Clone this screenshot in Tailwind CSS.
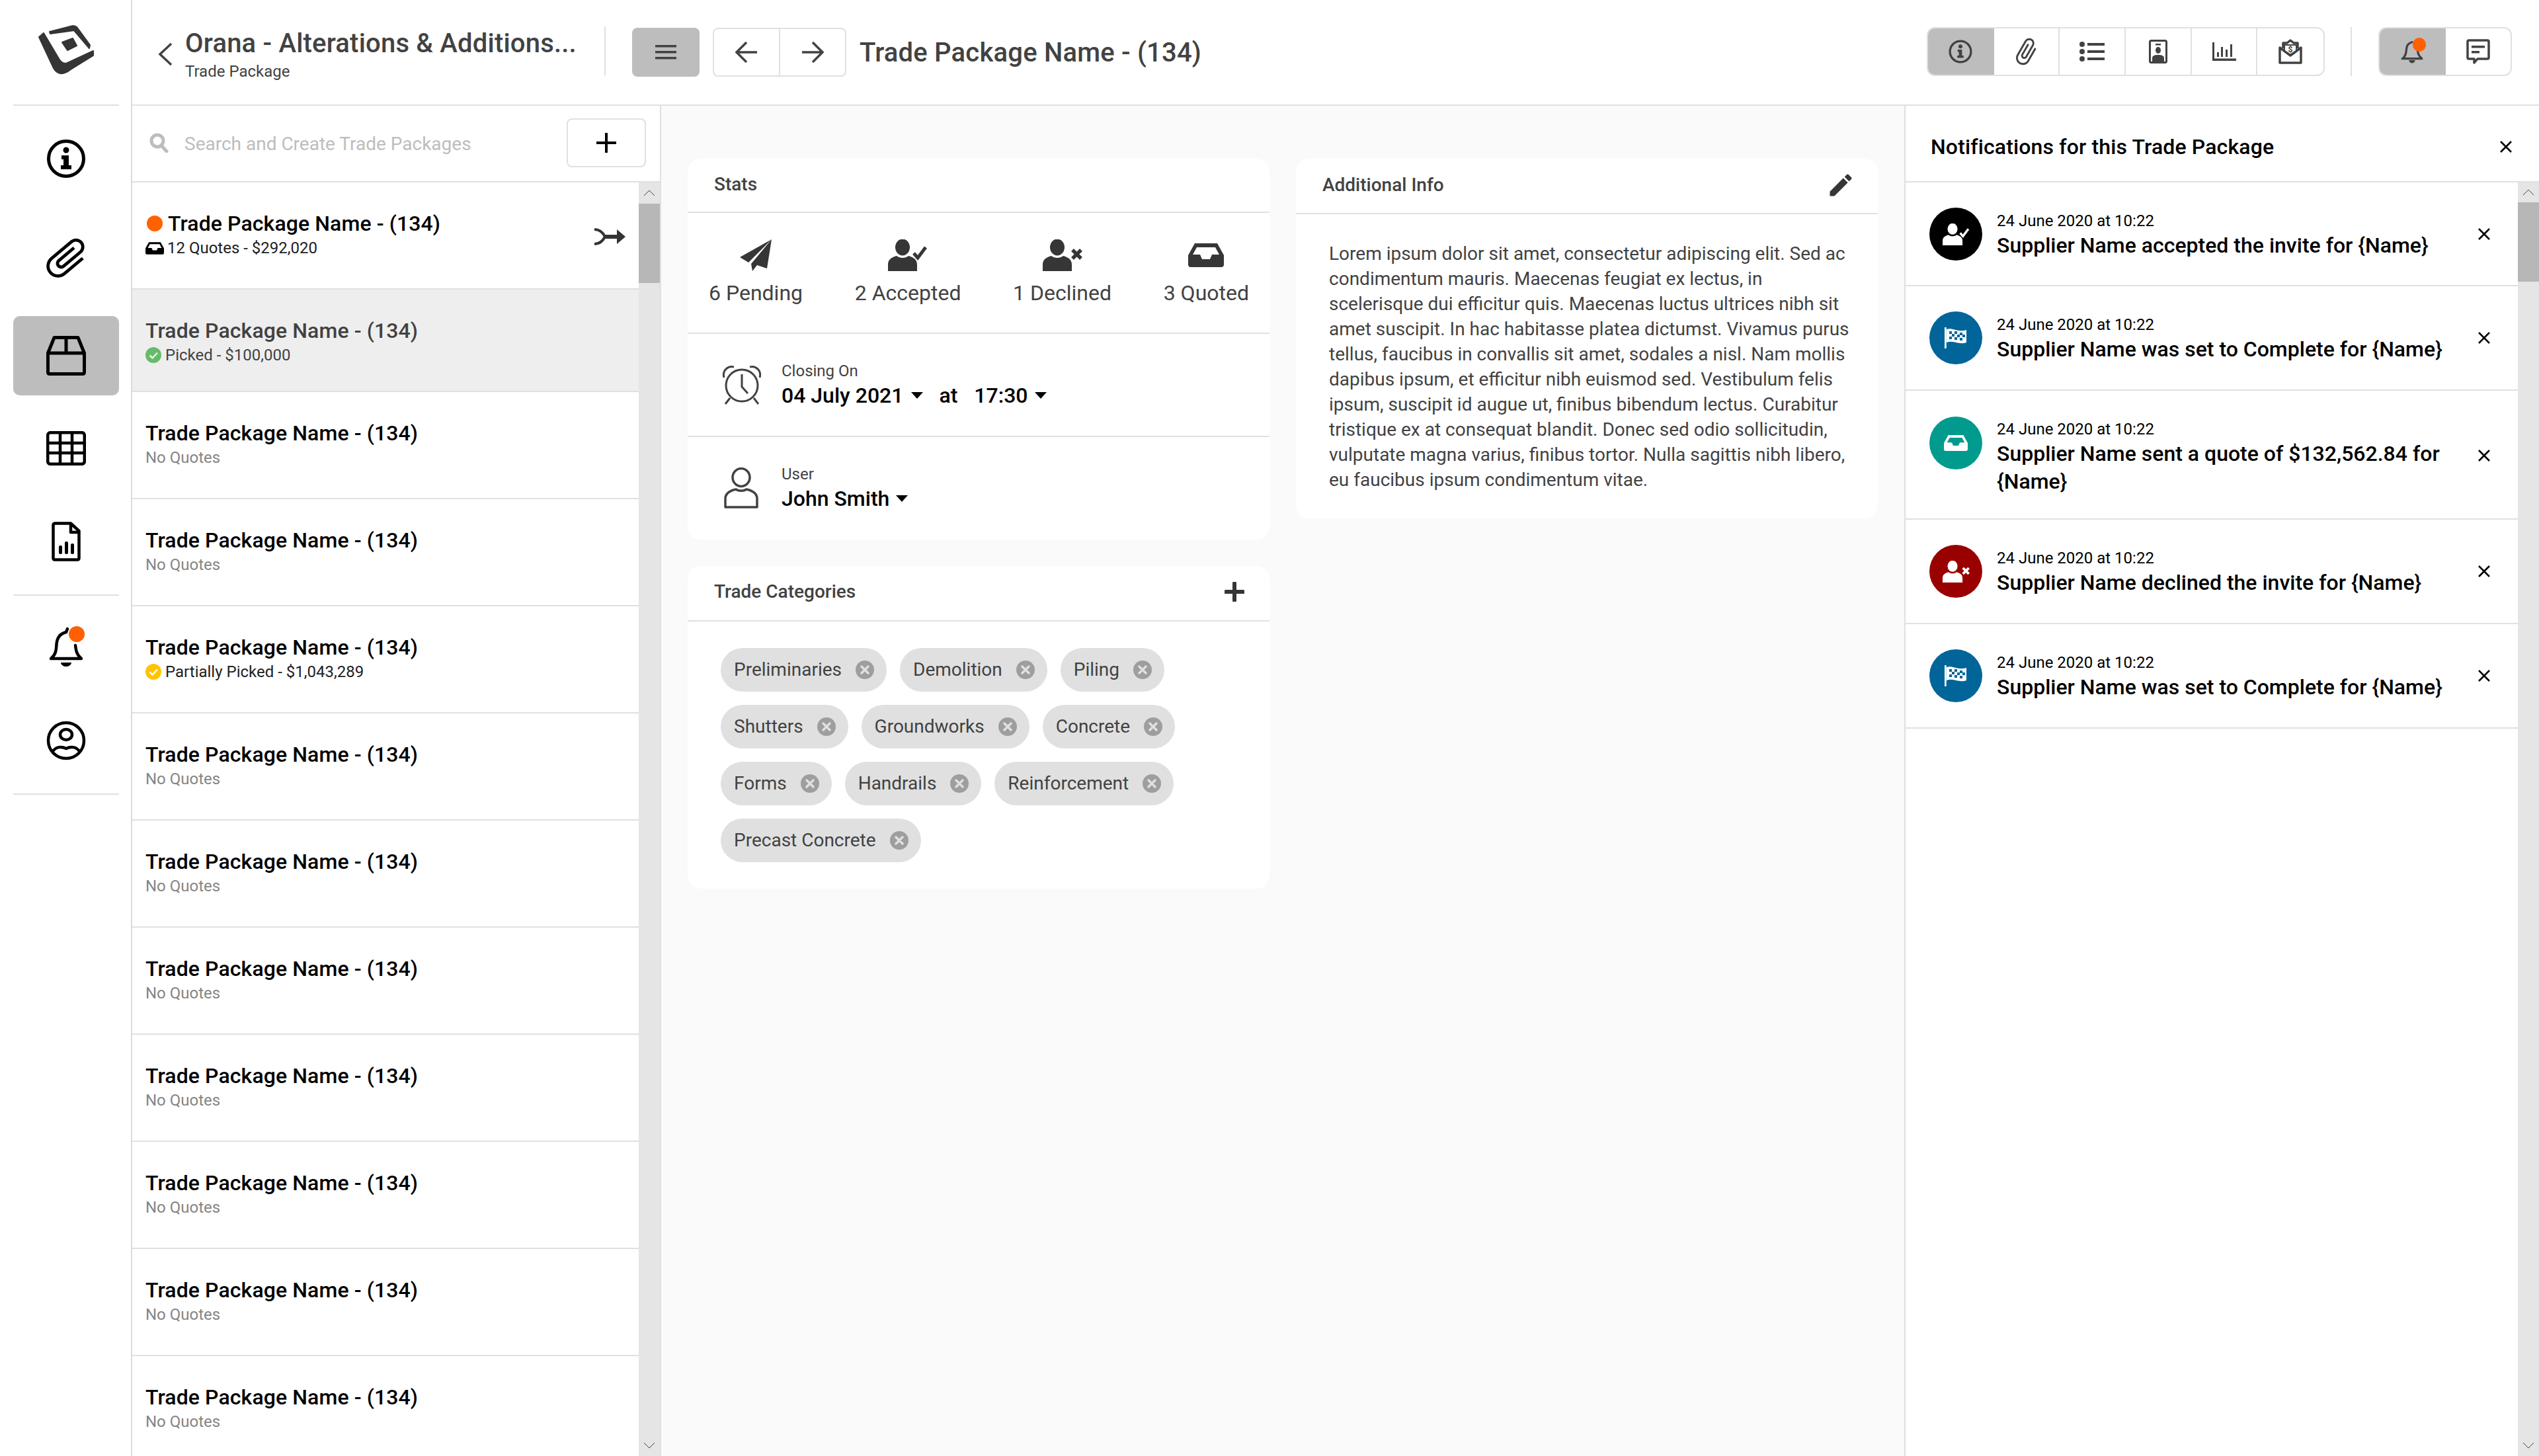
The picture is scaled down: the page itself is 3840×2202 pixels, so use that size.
<!DOCTYPE html>
<html><head><meta charset="utf-8"><script src="https://cdn.jsdelivr.net/npm/@tailwindcss/browser@4"></script><title>Trade Package</title></head>
<body class="m-0 bg-white">
<svg width="0" height="0" class="absolute">
<defs>
<g id="inbox"><path fill-rule="evenodd" d="M10 0H44L54 18V32a4 4 0 0 1-4 4H4a4 4 0 0 1-4-4V18ZM13 6 7 17H18L21 24H33L36 17H47L41 6Z"/></g>
<g id="pcheck"><ellipse cx="22" cy="12" rx="11" ry="12.5"/><path d="M0 48V38C0 30 6 27 13 25C18 29 26 29 31 25C38 27 44 30 44 38V48Z"/><path d="M39 21 45 28 57 12" fill="none" stroke="currentColor" stroke-width="5"/></g>
<g id="pcross"><ellipse cx="22" cy="12" rx="11" ry="12.5"/><path d="M0 48V38C0 30 6 27 13 25C18 29 26 29 31 25C38 27 44 30 44 38V48Z"/><path d="M45 16 58 29M58 16 45 29" fill="none" stroke="currentColor" stroke-width="5.5"/></g>
<g id="chipx"><circle cx="14" cy="14" r="14" fill="#9e9e9e"/><path d="M9 9 19 19M19 9 9 19" stroke="#e0e0e0" stroke-width="3.5" stroke-linecap="round"/></g>
<g id="cross"><path d="M2 2 18 18M18 2 2 18" stroke="#000" stroke-width="2.6" fill="none"/></g>
<g id="flag"><path d="M1 1V31" stroke="#fff" stroke-width="3.5" stroke-linecap="round"/><path d="M3 3C12 0 20 8 33 4V23C22 27 12 19 3 23Z" fill="#fff"/><path d="M7 6h4v4H7ZM15 6h4v4h-4ZM23 8h4v4h-4ZM11 10h4v4h-4ZM19 11h4v4h-4ZM27 11h4v4h-4ZM7 14h4v4H7ZM15 15h4v4h-4ZM23 16h4v4h-4Z" fill="#01659a"/></g>
</defs>
</svg>
<div class="w-[3840px] h-[2202px] overflow-hidden flex bg-white font-[Roboto,sans-serif] text-[#424242]">

<!-- rail -->
<aside class="w-[200px] shrink-0 border-r-2 border-[#dcdcdc] pl-[2px] flex flex-col items-center">
  <div class="w-[160px] h-[160px] shrink-0 border-b-2 border-[#e0e0e0] flex items-center justify-center pb-[10px]">
    <svg width="100" height="90" viewBox="50 30 100 90" fill="#353535" stroke="#353535" stroke-width="2" stroke-linejoin="round"><path d="M59 57 66 51 88 88Q92 97 100 97L141 78V85L107 106Q98 113 91 112 85 111 81 104Z"/><path d="M75 49 110 40Q114 40 117 43L136 69 135 74 112 47 76 52Z"/><path d="M94 65 110 59 116 70 102 77Z"/></svg>
  </div>
  <div class="w-[160px] h-[120px] mt-[20px] flex items-center justify-center">
    <svg width="60" height="60" viewBox="0 0 60 60"><circle cx="30" cy="30" r="26.5" fill="none" stroke="#000" stroke-width="5"/><circle cx="30" cy="17" r="4.5"/><path d="M23 25H34V40H38V46H22V40H26V31H23Z"/></svg>
  </div>
  <div class="w-[160px] h-[120px] mt-[30px] flex items-center justify-center">
    <svg width="76" height="76" viewBox="0 0 24 24"><path transform="rotate(50 12 12)" d="M16.5 6v11.5c0 2.21-1.79 4-4 4s-4-1.79-4-4V5c0-1.38 1.12-2.5 2.5-2.5s2.5 1.12 2.5 2.5v10.5c0 .55-.45 1-1 1s-1-.45-1-1V6H10v9.5c0 1.38 1.12 2.5 2.5 2.5s2.5-1.12 2.5-2.5V5c0-2.21-1.79-4-4-4S7 2.79 7 5v12.5c0 3.04 2.46 5.5 5.5 5.5s5.5-2.46 5.5-5.5V6h-1.5z"/></svg>
  </div>
  <div class="w-[160px] h-[120px] mt-[28px] rounded-[10px] bg-[#bdbdbd] flex items-center justify-center">
    <svg width="60" height="60" viewBox="0 0 60 60" fill="none" stroke="#000" stroke-width="5" stroke-linejoin="round"><path d="M12 2.500H48L57.500 26V55Q57.500 57.500 55 57.500H5Q2.500 57.500 2.500 55V26ZM2.500 26H57.500M30 3V26"/></svg>
  </div>
  <div class="w-[160px] h-[120px] mt-[20px] flex items-center justify-center">
    <svg width="60" height="52" viewBox="0 0 60 52" fill="none" stroke="#000" stroke-width="4.500"><rect x="2.200" y="2.200" width="55.600" height="47.600" rx="4"/><path d="M21 2V50M39 2V50M2 18H58M2 33H58"/></svg>
  </div>
  <div class="w-[160px] h-[120px] mt-[21px] flex items-center justify-center">
    <svg width="44" height="60" viewBox="0 0 44 60"><path d="M6 2.500H29L41.500 14V55Q41.500 57.500 39 57.500H5Q2.500 57.500 2.500 55V5Q2.500 2.500 6 2.500ZM29 3V16H41" fill="none" stroke="#000" stroke-width="4.500" stroke-linejoin="round"/><rect x="11" y="36" width="5" height="13" rx="2"/><rect x="20" y="30" width="5" height="19" rx="2"/><rect x="29" y="33" width="5" height="16" rx="2"/></svg>
  </div>
  <div class="w-[160px] h-[2px] mt-[20px] bg-[#e0e0e0] shrink-0"></div>
  <div class="w-[160px] h-[120px] mt-[19px] flex items-center justify-center relative">
    <svg width="60" height="64" viewBox="0 0 60 64" fill="none" stroke="#000" stroke-width="4.500" stroke-linecap="round"><path d="M7 48H53M8 47C15 41 15 34 15.500 27C16 16 22 10 30 8L32 3M44 28C45 36 46 42 52 47"/><path d="M22 54H38C37 62 23 62 22 54Z" fill="#000" stroke="none"/></svg>
    <div class="absolute left-[84px] top-[27px] w-[24px] h-[24px] rounded-full bg-[#ff6100]"></div>
  </div>
  <div class="w-[160px] h-[120px] mt-[20px] flex items-center justify-center">
    <svg width="60" height="60" viewBox="0 0 60 60" fill="none" stroke="#000" stroke-width="4.500"><circle cx="30" cy="30" r="27"/><ellipse cx="30" cy="21" rx="9" ry="8"/><path d="M9 48C14 38 24 39 30 42C36 39 46 38 51 48"/></svg>
  </div>
  <div class="w-[160px] h-[2px] mt-[20px] bg-[#e0e0e0] shrink-0"></div>
</aside>

<div class="flex-1 flex flex-col min-w-0">
<!-- header -->
<header class="h-[160px] shrink-0 border-b-2 border-[#e0e0e0] flex items-start">
  <div class="w-[798px] flex items-start h-full relative">
    <svg class="ml-[38px] mt-[64px]" width="24" height="36" viewBox="0 0 24 36" fill="none" stroke="#424242" stroke-width="3.500"><path d="M21 2 4 18 21 34"/></svg>
    <div class="ml-[18px] mt-[42px]">
      <div class="text-[40px] leading-[48px] font-medium tracking-[0.2px] whitespace-nowrap">Orana - Alterations &amp; Additions...</div>
      <div class="text-[24px] leading-[28px] mt-[4px]">Trade Package</div>
    </div>
    <div class="absolute left-[714px] top-[40px] w-[2px] h-[74px] bg-[#e0e0e0]"></div>
    <div class="absolute left-[756px] top-[42px] w-[102px] h-[74px] rounded-[8px] bg-[#bdbdbd] flex items-center justify-center">
      <svg width="32" height="24" viewBox="0 0 32 24" fill="#424242"><rect y="1" width="32" height="3.500"/><rect y="10" width="32" height="3.500"/><rect y="19" width="32" height="3.500"/></svg>
    </div>
    <div class="absolute left-[878px] top-[42px] w-[202px] h-[74px] rounded-[8px] border-2 border-[#e0e0e0] flex divide-x-2 divide-[#e0e0e0]">
      <div class="flex-1 flex items-center justify-center"><svg width="36" height="34" viewBox="0 0 36 34" fill="none" stroke="#424242" stroke-width="3.500"><path d="M34 17H3M18 2 3 17 18 32"/></svg></div>
      <div class="flex-1 flex items-center justify-center"><svg width="36" height="34" viewBox="0 0 36 34" fill="none" stroke="#424242" stroke-width="3.500"><path d="M2 17H33M18 2 33 17 18 32"/></svg></div>
    </div>
    <div class="absolute left-[1100px] top-[56px] text-[40px] leading-[48px] font-medium tracking-[0.2px] whitespace-nowrap">Trade Package Name - (134)</div>
  </div>
  <div class="ml-auto flex items-center h-[74px] mt-[41px] pr-[41px]">
    <div class="w-[602px] h-[74px] rounded-[12px] border-2 border-[#e0e0e0] flex overflow-hidden">
      <div class="w-[102px] -ml-[2px] bg-[#bdbdbd] flex items-center justify-center"><svg width="36" height="36" viewBox="0 0 60 60"><circle cx="30" cy="30" r="26.500" fill="none" stroke="#424242" stroke-width="5.500"/><circle cx="30" cy="17" r="5" fill="#424242"/><path d="M23 25H34V40H38V46H22V40H26V31H23Z" fill="#424242"/></svg></div>
      <div class="w-[100px] border-r-2 border-[#e0e0e0] flex items-center justify-center"><svg width="46" height="46" viewBox="0 0 24 24" fill="#424242"><path transform="rotate(30 12 12)" d="M16.5 6v11.5c0 2.21-1.79 4-4 4s-4-1.790-4-4V5c0-1.380 1.120-2.500 2.500-2.500s2.500 1.120 2.500 2.500v10.500c0 .55-.45 1-1 1s-1-.45-1-1V6H10v9.500c0 1.380 1.120 2.500 2.500 2.500s2.500-1.120 2.500-2.500V5c0-2.210-1.790-4-4-4S7 2.790 7 5v12.500c0 3.040 2.460 5.500 5.500 5.500s5.500-2.460 5.500-5.500V6h-1.500z"/></svg></div>
      <div class="w-[100px] border-r-2 border-[#e0e0e0] flex items-center justify-center"><svg width="38" height="30" viewBox="0 0 38 30" fill="#424242"><circle cx="4" cy="4" r="4"/><circle cx="4" cy="15" r="4"/><circle cx="4" cy="26" r="4"/><rect x="12" y="2" width="26" height="4"/><rect x="12" y="13" width="26" height="4"/><rect x="12" y="24" width="26" height="4"/></svg></div>
      <div class="w-[100px] border-r-2 border-[#e0e0e0] flex items-center justify-center"><svg width="28" height="36" viewBox="0 0 28 36"><rect x="1.500" y="1.500" width="25" height="33" rx="2" fill="none" stroke="#424242" stroke-width="3"/><rect x="10" y="6" width="8" height="2.500" fill="#424242"/><ellipse cx="14" cy="16" rx="4" ry="5" fill="#424242"/><path d="M5 33V28C5 24 9 23 14 23S23 24 23 28V33Z" fill="#424242"/></svg></div>
      <div class="w-[100px] border-r-2 border-[#e0e0e0] flex items-center justify-center"><svg width="36" height="28" viewBox="0 0 36 28" fill="#424242"><path d="M0 0H3V24.500H36V28H0Z"/><rect x="7" y="15" width="3" height="7"/><rect x="13" y="7" width="3" height="15"/><rect x="20" y="11" width="3" height="11"/><rect x="27" y="3" width="3" height="19"/></svg></div>
      <div class="w-[100px] flex items-center justify-center"><svg width="36" height="38" viewBox="0 0 36 38" fill="none" stroke="#424242" stroke-width="3.500"><path d="M7 14V6H13L18 2 23 6H29V14M2 13V36H34V13L18 25Z" stroke-linejoin="round"/><path d="M8 8H28V18L18 25 8 18Z" fill="#424242" stroke="none"/><path d="M10 10H26V17L18 22.500 10 17Z" fill="#fff" stroke="none"/><text x="18" y="19.500" text-anchor="middle" font-size="12" font-weight="700" fill="#424242" stroke="none" font-family="Roboto">$</text></svg></div>
    </div>
    <div class="w-[2px] h-[74px] bg-[#e0e0e0] ml-[39px]"></div>
    <div class="w-[202px] h-[74px] ml-[40px] rounded-[12px] border-2 border-[#e0e0e0] flex overflow-hidden">
      <div class="w-[102px] -ml-[2px] bg-[#bdbdbd] flex items-center justify-center relative"><svg width="36" height="38" viewBox="0 0 60 64" fill="none" stroke="#424242" stroke-width="5.500" stroke-linecap="round"><path d="M5 50H55M7 49C15 41 15 34 15.500 27C16 16 22 10 30 8M44 28C45 36 46 42 54 49"/><path d="M22 54H38C37 64 23 64 22 54Z" fill="#424242" stroke="none"/></svg><div class="absolute left-[52px] top-[14px] w-[20px] h-[21px] rounded-full bg-[#ff6100]"></div></div>
      <div class="flex-1 flex items-center justify-center"><svg width="36" height="38" viewBox="0 0 36 38"><path d="M4 2H32Q34 2 34 4V28Q34 30 32 30H17L12 36V30H4Q2 30 2 28V4Q2 2 4 2Z" fill="none" stroke="#424242" stroke-width="3.500" stroke-linejoin="round"/><rect x="8" y="10" width="20" height="3.500" fill="#424242"/><rect x="8" y="18" width="12" height="3.500" fill="#424242"/></svg></div>
    </div>
  </div>
</header>

<div class="flex-1 flex min-h-0">
<!-- trade package list -->
<section class="w-[800px] shrink-0 border-r-2 border-[#e0e0e0] flex flex-col min-h-0">
  <div class="h-[116px] shrink-0 border-b-2 border-[#e0e0e0] flex items-center pl-[26px]">
    <svg width="30" height="30" viewBox="0 0 30 30" fill="none" stroke="#bdbdbd" stroke-width="5" class="mt-[-2px]"><circle cx="12" cy="12" r="9"/><path d="M18 19 26 28" stroke-linecap="round"/></svg>
    <div class="ml-[23px] mt-[2px] text-[28px] text-[#bdbdbd] leading-[34px] whitespace-nowrap">Search and Create Trade Packages</div>
    <div class="ml-auto mr-[21px] mt-[-2px] w-[120px] h-[74px] rounded-[8px] border-2 border-[#e0e0e0] flex items-center justify-center"><svg width="30" height="30" viewBox="0 0 30 30"><path d="M15 0V30M0 15H30" stroke="#000" stroke-width="4"/></svg></div>
  </div>
  <div class="flex-1 flex min-h-0">
    <div class="flex-1 overflow-hidden flex flex-col">
      <div class="h-[162px] shrink-0 border-b-2 border-[#e0e0e0] pl-[20px] pt-[42px] relative">
        <div class="flex items-center text-[32px] leading-[40px] font-medium tracking-[0.1px] text-black whitespace-nowrap"><span class="w-[24px] h-[24px] ml-[2px] mr-[8px] rounded-full bg-[#ff6100]"></span>Trade Package Name - (134)</div>
        <div class="flex items-center text-[24px] leading-[28px] mt-[3px] text-[#212121]"><svg width="28" height="19" viewBox="0 0 54 36" class="mr-[5px]" fill="#000"><use href="#inbox"/></svg>12 Quotes - $292,020</div>
        <svg class="absolute left-[699px] top-[69px]" width="47" height="26" viewBox="0 0 47 26" fill="none" stroke="#333"><path d="M0 2C9 2 13 7 16 13C13 19 9 24 0 24" stroke-width="4"/><path d="M16 13H36" stroke-width="6"/><path d="M34 2 47 13 34 24Z" fill="#333" stroke="none"/></svg>
      </div>
      <div class="h-[155px] shrink-0 border-b-2 border-[#e0e0e0] bg-[#eeeeee] pl-[20px] pt-[42px]">
        <div class="text-[32px] leading-[40px] font-medium tracking-[0.1px] whitespace-nowrap">Trade Package Name - (134)</div>
        <div class="flex items-center text-[24px] leading-[28px] mt-[3px]"><svg width="24" height="24" viewBox="0 0 24 24" class="mr-[6px]"><circle cx="12" cy="12" r="12" fill="#66bb6a"/><path d="M6.500 12.500 10.500 16.500 18 8.500" fill="none" stroke="#e8f5e9" stroke-width="2.500"/></svg>Picked - $100,000</div>
      </div>
      <div class="h-[162px] shrink-0 border-b-2 border-[#e0e0e0] pl-[20px] pt-[42px]"><div class="text-[32px] leading-[40px] font-medium tracking-[0.1px] text-black whitespace-nowrap">Trade Package Name - (134)</div><div class="text-[24px] leading-[28px] mt-[3px] text-[#858585]">No Quotes</div></div>
      <div class="h-[162px] shrink-0 border-b-2 border-[#e0e0e0] pl-[20px] pt-[42px]"><div class="text-[32px] leading-[40px] font-medium tracking-[0.1px] text-black whitespace-nowrap">Trade Package Name - (134)</div><div class="text-[24px] leading-[28px] mt-[3px] text-[#858585]">No Quotes</div></div>
      <div class="h-[162px] shrink-0 border-b-2 border-[#e0e0e0] pl-[20px] pt-[42px]"><div class="text-[32px] leading-[40px] font-medium tracking-[0.1px] text-black whitespace-nowrap">Trade Package Name - (134)</div><div class="flex items-center text-[24px] leading-[28px] mt-[3px] text-[#212121]"><svg width="24" height="24" viewBox="0 0 24 24" class="mr-[6px]"><circle cx="12" cy="12" r="12" fill="#ffc400"/><path d="M6.500 12.500 10.500 16.500 18 8.500" fill="none" stroke="#fff" stroke-width="2.500"/></svg>Partially Picked - $1,043,289</div></div>
      <div class="h-[162px] shrink-0 border-b-2 border-[#e0e0e0] pl-[20px] pt-[42px]"><div class="text-[32px] leading-[40px] font-medium tracking-[0.1px] text-black whitespace-nowrap">Trade Package Name - (134)</div><div class="text-[24px] leading-[28px] mt-[3px] text-[#858585]">No Quotes</div></div>
      <div class="h-[162px] shrink-0 border-b-2 border-[#e0e0e0] pl-[20px] pt-[42px]"><div class="text-[32px] leading-[40px] font-medium tracking-[0.1px] text-black whitespace-nowrap">Trade Package Name - (134)</div><div class="text-[24px] leading-[28px] mt-[3px] text-[#858585]">No Quotes</div></div>
      <div class="h-[162px] shrink-0 border-b-2 border-[#e0e0e0] pl-[20px] pt-[42px]"><div class="text-[32px] leading-[40px] font-medium tracking-[0.1px] text-black whitespace-nowrap">Trade Package Name - (134)</div><div class="text-[24px] leading-[28px] mt-[3px] text-[#858585]">No Quotes</div></div>
      <div class="h-[162px] shrink-0 border-b-2 border-[#e0e0e0] pl-[20px] pt-[42px]"><div class="text-[32px] leading-[40px] font-medium tracking-[0.1px] text-black whitespace-nowrap">Trade Package Name - (134)</div><div class="text-[24px] leading-[28px] mt-[3px] text-[#858585]">No Quotes</div></div>
      <div class="h-[162px] shrink-0 border-b-2 border-[#e0e0e0] pl-[20px] pt-[42px]"><div class="text-[32px] leading-[40px] font-medium tracking-[0.1px] text-black whitespace-nowrap">Trade Package Name - (134)</div><div class="text-[24px] leading-[28px] mt-[3px] text-[#858585]">No Quotes</div></div>
      <div class="h-[162px] shrink-0 border-b-2 border-[#e0e0e0] pl-[20px] pt-[42px]"><div class="text-[32px] leading-[40px] font-medium tracking-[0.1px] text-black whitespace-nowrap">Trade Package Name - (134)</div><div class="text-[24px] leading-[28px] mt-[3px] text-[#858585]">No Quotes</div></div>
      <div class="h-[162px] shrink-0 pl-[20px] pt-[42px]"><div class="text-[32px] leading-[40px] font-medium tracking-[0.1px] text-black whitespace-nowrap">Trade Package Name - (134)</div><div class="text-[24px] leading-[28px] mt-[3px] text-[#858585]">No Quotes</div></div>
    </div>
    <div class="w-[32px] shrink-0 bg-[#e5e5e5] flex flex-col">
      <div class="h-[32px] flex items-center justify-center"><svg width="18" height="10" viewBox="0 0 18 10" fill="none" stroke="#424242" stroke-width="1"><path d="M1 9 9 1 17 9"/></svg></div>
      <div class="h-[120px] bg-[#b7b7b7]"></div>
      <div class="mt-auto h-[32px] flex items-center justify-center"><svg width="18" height="10" viewBox="0 0 18 10" fill="none" stroke="#424242" stroke-width="1"><path d="M1 1 9 9 17 1"/></svg></div>
    </div>
  </div>
</section>

<!-- center -->
<main class="flex-1 bg-[#fafafa] pt-[80px] pl-[40px] flex gap-[40px] items-start min-w-0">
  <div class="w-[880px] flex flex-col gap-[40px]">
    <div class="bg-white rounded-[20px] overflow-hidden">
      <div class="h-[82px] border-b-2 border-[#e0e0e0] pl-[40px] pt-[22px] text-[28px] leading-[34px] font-medium">Stats</div>
      <div class="h-[183px] border-b-2 border-[#e0e0e0] pl-[32px] pr-[31px] pt-[40px] flex justify-between text-[32px] leading-[36px]">
        <div class="flex flex-col items-center"><svg width="48" height="48" viewBox="0 0 48 48" fill="#363636"><path d="M48 0 0 27 13 35Z"/><path d="M48 0 17 37 19 48 26 39 41 44Z"/></svg><div class="mt-[15px] whitespace-nowrap">6 Pending</div></div>
        <div class="flex flex-col items-center"><svg width="60" height="48" viewBox="0 0 60 48" fill="#363636" class="text-[#363636]"><use href="#pcheck"/></svg><div class="mt-[15px] whitespace-nowrap">2 Accepted</div></div>
        <div class="flex flex-col items-center"><svg width="60" height="48" viewBox="0 0 60 48" fill="#363636" class="text-[#363636]"><use href="#pcross"/></svg><div class="mt-[15px] whitespace-nowrap">1 Declined</div></div>
        <div class="flex flex-col items-center"><svg width="54" height="36" viewBox="0 0 54 36" fill="#363636" class="mt-[6px] mb-[6px]"><use href="#inbox"/></svg><div class="mt-[15px] whitespace-nowrap">3 Quoted</div></div>
      </div>
      <div class="h-[156px] border-b-2 border-[#e0e0e0] pl-[52px] pt-[47px] flex">
        <svg width="60" height="60" viewBox="0 0 60 60" fill="none" stroke="#424242" stroke-width="3"><circle cx="30" cy="31" r="24"/><path d="M30 14V33L39 43M12 50 5 59M48 50 55 59M3 19C0 8 9 1 18 3M57 19C60 8 51 1 42 3"/></svg>
        <div class="ml-[30px]">
          <div class="text-[24px] leading-[28px] mt-[-5px]">Closing On</div>
          <div class="flex items-center text-[32px] leading-[40px] font-medium text-black mt-[3px] whitespace-nowrap">04 July 2021<svg class="ml-[12px]" width="18" height="10" viewBox="0 0 18 10"><path d="M0 0H18L9 10Z"/></svg><span class="ml-[24px]">at</span><span class="ml-[25px]">17:30</span><svg class="ml-[10px]" width="18" height="10" viewBox="0 0 18 10"><path d="M0 0H18L9 10Z"/></svg></div>
        </div>
      </div>
      <div class="h-[155px] pl-[55px] pt-[46px] flex">
        <svg width="52" height="62" viewBox="0 0 52 62" fill="none" stroke="#424242" stroke-width="3.500"><ellipse cx="26" cy="15" rx="13" ry="13.500"/><path d="M2 60V47C2 38 12 34 18 33C22 36 30 36 34 33C40 34 50 38 50 47V60Z" stroke-linejoin="round"/></svg>
        <div class="ml-[35px]">
          <div class="text-[24px] leading-[28px] mt-[-4px]">User</div>
          <div class="flex items-center text-[32px] leading-[40px] font-medium text-black mt-[3px] whitespace-nowrap">John Smith<svg class="ml-[10px]" width="18" height="10" viewBox="0 0 18 10"><path d="M0 0H18L9 10Z"/></svg></div>
        </div>
      </div>
    </div>
    <div class="bg-white rounded-[20px] overflow-hidden">
      <div class="h-[84px] border-b-2 border-[#e0e0e0] pl-[40px] pr-[38px] flex items-center justify-between text-[28px] leading-[34px] font-medium pb-[4px]">Trade Categories<svg width="30" height="30" viewBox="0 0 30 30"><path d="M15 2V28M2 15H28" stroke="#363636" stroke-width="6" stroke-linecap="round"/></svg></div>
      <div class="pt-[40px] pb-[40px] pl-[50px] pr-[40px] flex flex-col gap-[20px] text-[28px] leading-[34px]">
        <div class="flex gap-[20px]">
          <div class="h-[66px] rounded-full bg-[#e0e0e0] pl-[20px] pr-[19px] flex items-center gap-[21px]">Preliminaries<svg width="28" height="28" viewBox="0 0 28 28"><use href="#chipx"/></svg></div>
          <div class="h-[66px] rounded-full bg-[#e0e0e0] pl-[20px] pr-[19px] flex items-center gap-[21px]">Demolition<svg width="28" height="28" viewBox="0 0 28 28"><use href="#chipx"/></svg></div>
          <div class="h-[66px] rounded-full bg-[#e0e0e0] pl-[20px] pr-[19px] flex items-center gap-[21px]">Piling<svg width="28" height="28" viewBox="0 0 28 28"><use href="#chipx"/></svg></div>
        </div>
        <div class="flex gap-[20px]">
          <div class="h-[66px] rounded-full bg-[#e0e0e0] pl-[20px] pr-[19px] flex items-center gap-[21px]">Shutters<svg width="28" height="28" viewBox="0 0 28 28"><use href="#chipx"/></svg></div>
          <div class="h-[66px] rounded-full bg-[#e0e0e0] pl-[20px] pr-[19px] flex items-center gap-[21px]">Groundworks<svg width="28" height="28" viewBox="0 0 28 28"><use href="#chipx"/></svg></div>
          <div class="h-[66px] rounded-full bg-[#e0e0e0] pl-[20px] pr-[19px] flex items-center gap-[21px]">Concrete<svg width="28" height="28" viewBox="0 0 28 28"><use href="#chipx"/></svg></div>
        </div>
        <div class="flex gap-[20px]">
          <div class="h-[66px] rounded-full bg-[#e0e0e0] pl-[20px] pr-[19px] flex items-center gap-[21px]">Forms<svg width="28" height="28" viewBox="0 0 28 28"><use href="#chipx"/></svg></div>
          <div class="h-[66px] rounded-full bg-[#e0e0e0] pl-[20px] pr-[19px] flex items-center gap-[21px]">Handrails<svg width="28" height="28" viewBox="0 0 28 28"><use href="#chipx"/></svg></div>
          <div class="h-[66px] rounded-full bg-[#e0e0e0] pl-[20px] pr-[19px] flex items-center gap-[21px]">Reinforcement<svg width="28" height="28" viewBox="0 0 28 28"><use href="#chipx"/></svg></div>
        </div>
        <div class="flex gap-[20px]">
          <div class="h-[66px] rounded-full bg-[#e0e0e0] pl-[20px] pr-[19px] flex items-center gap-[21px]">Precast Concrete<svg width="28" height="28" viewBox="0 0 28 28"><use href="#chipx"/></svg></div>
        </div>
      </div>
    </div>
  </div>
  <div class="w-[880px] bg-white rounded-[20px] overflow-hidden">
    <div class="h-[84px] border-b-2 border-[#e0e0e0] pl-[40px] pr-[34px] flex items-center justify-between text-[28px] leading-[34px] font-medium pb-[2px]">Additional Info<svg width="44" height="44" viewBox="0 0 24 24" fill="#363636"><path d="M3 17.250V21h3.750L17.810 9.940l-3.750-3.750L3 17.250zM20.710 7.040c.39-.39.39-1.020 0-1.410l-2.340-2.340c-.39-.39-1.020-.39-1.410 0l-1.830 1.830 3.750 3.750 1.830-1.830z"/></svg></div>
    <p class="pt-[41px] pb-[39px] pl-[50px] pr-[40px] text-[28px] leading-[38px]">Lorem ipsum dolor sit amet, consectetur adipiscing elit. Sed ac condimentum mauris. Maecenas feugiat ex lectus, in scelerisque dui efficitur quis. Maecenas luctus ultrices nibh sit amet suscipit. In hac habitasse platea dictumst. Vivamus purus tellus, faucibus in convallis sit amet, sodales a nisl. Nam mollis dapibus ipsum, et efficitur nibh euismod sed. Vestibulum felis ipsum, suscipit id augue ut, finibus bibendum lectus. Curabitur tristique ex at consequat blandit. Donec sed odio sollicitudin, vulputate magna varius, finibus tortor. Nulla sagittis nibh libero, eu faucibus ipsum condimentum vitae.</p>
  </div>
</main>

<!-- notifications -->
<section class="w-[960px] shrink-0 border-l-2 border-[#e0e0e0] flex flex-col bg-white text-black min-h-0">
  <div class="h-[116px] shrink-0 border-b-2 border-[#e0e0e0] pl-[38px] pr-[40px] pt-[10px] flex items-center justify-between">
    <div class="text-[32px] leading-[40px] font-medium tracking-[0.14px] whitespace-nowrap">Notifications for this Trade Package</div>
    <svg width="20" height="20" viewBox="0 0 20 20"><use href="#cross"/></svg>
  </div>
  <div class="flex-1 flex min-h-0">
    <div class="flex-1 min-w-0">
      <div class="h-[157px] border-b-2 border-[#e0e0e0] flex items-start pl-[36px] pr-[41px]">
        <div class="w-[80px] h-[80px] mt-[38px] shrink-0 rounded-full bg-black flex items-center justify-center text-white"><svg width="41" height="33" viewBox="0 0 60 48" fill="#fff"><use href="#pcheck"/></svg></div>
        <div class="ml-[22px] pt-[42px] flex-1 min-w-0"><div class="text-[24px] leading-[32px]">24 June 2020 at 10:22</div><div class="text-[32px] leading-[42px] font-medium">Supplier Name accepted the invite for {Name}</div></div>
        <svg class="mt-[68px] shrink-0" width="20" height="20" viewBox="0 0 20 20"><use href="#cross"/></svg>
      </div>
      <div class="h-[158px] border-b-2 border-[#e0e0e0] flex items-start pl-[36px] pr-[41px]">
        <div class="w-[80px] h-[80px] mt-[38px] shrink-0 rounded-full bg-[#01659a] flex items-center justify-center"><svg width="34" height="32" viewBox="0 0 34 32"><use href="#flag"/></svg></div>
        <div class="ml-[22px] pt-[42px] flex-1 min-w-0"><div class="text-[24px] leading-[32px]">24 June 2020 at 10:22</div><div class="text-[32px] leading-[42px] font-medium">Supplier Name was set to Complete for {Name}</div></div>
        <svg class="mt-[68px] shrink-0" width="20" height="20" viewBox="0 0 20 20"><use href="#cross"/></svg>
      </div>
      <div class="h-[195px] border-b-2 border-[#e0e0e0] flex items-start pl-[36px] pr-[41px]">
        <div class="w-[80px] h-[80px] mt-[39px] shrink-0 rounded-full bg-[#009b8d] flex items-center justify-center"><svg width="36" height="24" viewBox="0 0 54 36" fill="#fff"><use href="#inbox"/></svg></div>
        <div class="ml-[22px] pt-[42px] flex-1 min-w-0"><div class="text-[24px] leading-[32px]">24 June 2020 at 10:22</div><div class="text-[32px] leading-[42px] font-medium">Supplier Name sent a quote of $132,562.84 for {Name}</div></div>
        <svg class="mt-[88px] shrink-0" width="20" height="20" viewBox="0 0 20 20"><use href="#cross"/></svg>
      </div>
      <div class="h-[158px] border-b-2 border-[#e0e0e0] flex items-start pl-[36px] pr-[41px]">
        <div class="w-[80px] h-[80px] mt-[38px] shrink-0 rounded-full bg-[#990000] flex items-center justify-center text-white"><svg width="41" height="33" viewBox="0 0 60 48" fill="#fff"><use href="#pcross"/></svg></div>
        <div class="ml-[22px] pt-[42px] flex-1 min-w-0"><div class="text-[24px] leading-[32px]">24 June 2020 at 10:22</div><div class="text-[32px] leading-[42px] font-medium">Supplier Name declined the invite for {Name}</div></div>
        <svg class="mt-[68px] shrink-0" width="20" height="20" viewBox="0 0 20 20"><use href="#cross"/></svg>
      </div>
      <div class="h-[158px] border-b-2 border-[#e0e0e0] flex items-start pl-[36px] pr-[41px]">
        <div class="w-[80px] h-[80px] mt-[38px] shrink-0 rounded-full bg-[#01659a] flex items-center justify-center"><svg width="34" height="32" viewBox="0 0 34 32"><use href="#flag"/></svg></div>
        <div class="ml-[22px] pt-[42px] flex-1 min-w-0"><div class="text-[24px] leading-[32px]">24 June 2020 at 10:22</div><div class="text-[32px] leading-[42px] font-medium">Supplier Name was set to Complete for {Name}</div></div>
        <svg class="mt-[68px] shrink-0" width="20" height="20" viewBox="0 0 20 20"><use href="#cross"/></svg>
      </div>
    </div>
    <div class="w-[32px] shrink-0 bg-[#e5e5e5] flex flex-col">
      <div class="h-[30px] flex items-center justify-center"><svg width="18" height="10" viewBox="0 0 18 10" fill="none" stroke="#424242" stroke-width="1"><path d="M1 9 9 1 17 9"/></svg></div>
      <div class="h-[120px] bg-[#b7b7b7]"></div>
      <div class="mt-auto h-[32px] flex items-center justify-center"><svg width="18" height="10" viewBox="0 0 18 10" fill="none" stroke="#424242" stroke-width="1"><path d="M1 1 9 9 17 1"/></svg></div>
    </div>
  </div>
</section>
</div>
</div>
</div>
</body></html>
